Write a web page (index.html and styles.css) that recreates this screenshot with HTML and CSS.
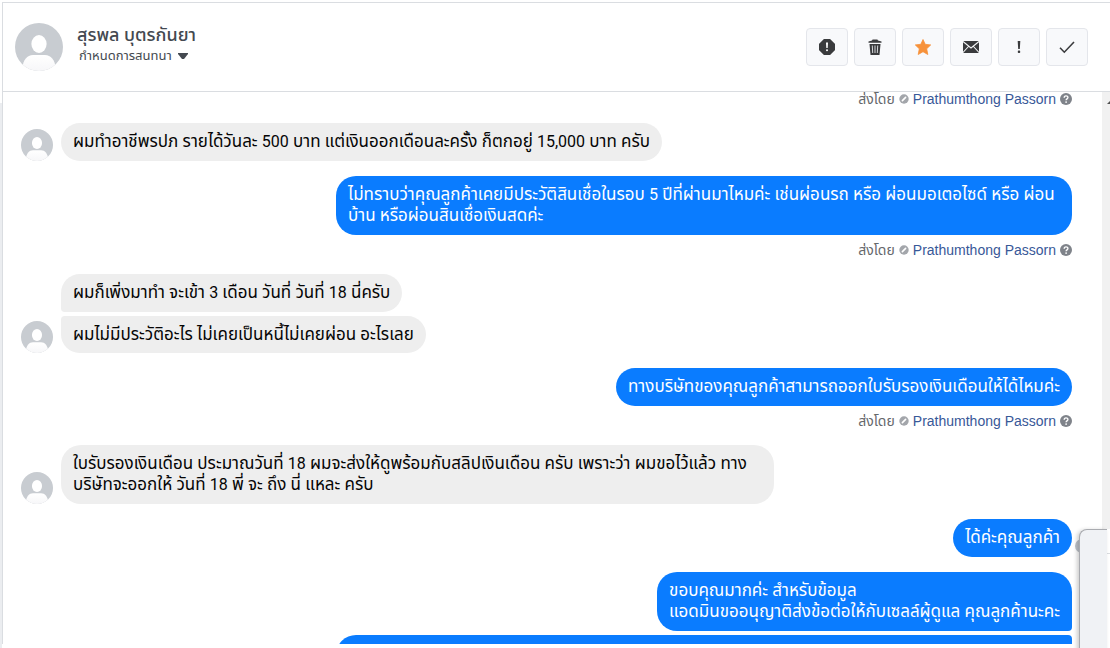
FILE: index.html
```html
<!doctype html>
<html lang="th">
<head>
<meta charset="utf-8">
<title>สุรพล บุตรกันยา</title>
<link rel="stylesheet" href="styles.css">
</head>

<body>
<!-- shared drawings -->
<svg class="defs" width="0" height="0">
	<defs>
		<linearGradient id="shade" x1="0" y1="0" x2="0" y2="1">
			<stop offset="0" stop-color="#fff"/>
			<stop offset="1" stop-color="#f6f6f8"/>
		</linearGradient>
		<clipPath id="round"><circle cx="24" cy="24" r="24"/></clipPath>
	</defs>
	<symbol id="person" viewBox="0 0 48 48">
		<g clip-path="url(#round)">
			<rect width="48" height="48" fill="#c8ccd1"/>
			<ellipse cx="24" cy="21" rx="7.6" ry="9" fill="#fff"/>
			<path d="M7 45c1.500-8 5-13 11-13h12c6 0 9.500 5 11 13v4H7z" fill="url(#shade)"/>
		</g>
	</symbol>
	<symbol id="badge" viewBox="0 0 10 10">
		<circle cx="5" cy="5" r="4.700" fill="#a3a6ab"/>
		<path d="M3.400 6.600l3.200-3.200" stroke="#fff" stroke-width="1.600" stroke-linecap="round"/>
	</symbol>
	<symbol id="help" viewBox="0 0 12 12">
		<circle cx="6" cy="6" r="6" fill="#7f838a"/>
		<path d="M4.200 4.700c0-2.500 3.700-2.400 3.700-.2 0 1.400-1.800 1.400-1.800 2.700" fill="none" stroke="#fff" stroke-width="1.400"/>
		<circle cx="6.100" cy="9.100" r=".9" fill="#fff"/>
	</symbol>
</svg>

<div class="window">
	<main class="chat">
		<header class="head">
			<svg class="avatar-big"><use href="#person"/></svg>
			<div class="who">
				<h1 class="name">สุรพล บุตรกันยา</h1>
				<button class="assign">กำหนดการสนทนา<svg class="caret" viewBox="0 0 10 6"><path d="M0 0h10v1L6 6H4L0 1z" fill="#444950"/></svg></button>
			</div>
			<div class="tools">
				<button class="tool" aria-label="สแปม"><svg class="icon" viewBox="0 0 16 16"><path d="M5 0h6l5 5v6l-5 5H5l-5-5V5z" fill="#3a3b3d" stroke="#3a3b3d" stroke-linejoin="round" stroke-width=".2"/><path d="M7 3.500h2L8.700 9H7.300z" fill="#fff"/><rect x="7" y="10.300" width="2" height="2" rx="1" fill="#fff"/></svg></button>
				<button class="tool" aria-label="ลบ"><svg class="icon" viewBox="0 0 16 16"><path d="M1.500 3.800V2.500L5 1.500 5.600.4h4.800l.6 1.100 3.500 1v1.300z" fill="#3a3b3d"/><path d="M2.500 5h11l-1 11h-9z" fill="#3a3b3d"/><path d="M5.300 6.500l.4 7.500M8 6.500V14M10.700 6.500l-.4 7.500" stroke="#d4d6d9" stroke-width="1"/></svg></button>
				<button class="tool" aria-label="ติดดาว"><svg class="icon" viewBox="0 0 16 16"><path d="M8 .5l2.200 4.800 5.500.6-4 3.900L12.800 15.500 8 12.700l-4.800 2.800 1.100-5.700-4-3.900 5.500-.6z" fill="#f7923b" stroke="#f7923b" stroke-linejoin="round" stroke-width=".8"/></svg></button>
				<button class="tool" aria-label="ยังไม่ได้อ่าน"><svg class="icon" viewBox="0 0 16 16"><rect y="2" width="16" height="12" rx="1" fill="#3a3b3d"/><path d="M0 2.500l8 6.500 8-6.500M0 13.500l5.500-6M16 13.500l-5.500-6" fill="none" stroke="#f5f6f7" stroke-width="1.100"/></svg></button>
				<button class="tool" aria-label="ติดตาม"><svg class="icon" viewBox="0 0 16 16"><path d="M6.700 2h2.600l-.5 8H7.200z" fill="#3a3b3d"/><rect x="6.800" y="11.600" width="2.400" height="2.400" rx=".8" fill="#3a3b3d"/></svg></button>
				<button class="tool" aria-label="เสร็จสิ้น"><svg class="icon" viewBox="0 0 16 16"><path d="M1 8.800l4.300 4.400L15 3" fill="none" stroke="#3a3b3d" stroke-width="1.600"/></svg></button>
			</div>
		</header>

		<div class="body">
			<div class="thread">
				<div class="sent">ส่งโดย <svg class="badge"><use href="#badge"/></svg> <a class="agent" href="#">Prathumthong Passorn</a> <svg class="help"><use href="#help"/></svg></div>

				<div class="group them">
					<svg class="avatar"><use href="#person"/></svg>
					<div class="stack">
						<p class="bubble">ผมทำอาชีพรปภ รายได้วันละ <span class="num">500</span> บาท แต่เงินออกเดือนละครั้ง ก็ตกอยู่ <span class="num">15,000</span> บาท ครับ</p>
					</div>
				</div>

				<div class="group us">
					<p class="bubble">ไม่ทราบว่าคุณลูกค้าเคยมีประวัติสินเชื่อในรอบ <span class="num">5</span> ปีที่ผ่านมาไหมค่ะ เช่นผ่อนรถ หรือ ผ่อนมอเตอไซด์ หรือ ผ่อน<wbr>บ้าน หรือผ่อนสินเชื่อเงินสดค่ะ</p>
				</div>
				<div class="sent">ส่งโดย <svg class="badge"><use href="#badge"/></svg> <a class="agent" href="#">Prathumthong Passorn</a> <svg class="help"><use href="#help"/></svg></div>

				<div class="group them">
					<svg class="avatar"><use href="#person"/></svg>
					<div class="stack">
						<p class="bubble first">ผมก็เพิ่งมาทำ จะเข้า <span class="num">3</span> เดือน วันที่ วันที่ <span class="num">18</span> นี่ครับ</p>
						<p class="bubble last">ผมไม่มีประวัติอะไร ไม่เคยเป็นหนี้ไม่เคยผ่อน อะไรเลย</p>
					</div>
				</div>

				<div class="group us">
					<p class="bubble">ทางบริษัทของคุณลูกค้าสามารถออกใบรับรองเงินเดือนให้ได้ไหมค่ะ</p>
				</div>
				<div class="sent">ส่งโดย <svg class="badge"><use href="#badge"/></svg> <a class="agent" href="#">Prathumthong Passorn</a> <svg class="help"><use href="#help"/></svg></div>

				<div class="group them">
					<svg class="avatar"><use href="#person"/></svg>
					<div class="stack">
						<p class="bubble">ใบรับรองเงินเดือน ประมาณวันที่ <span class="num">18</span> ผมจะส่งให้ดูพร้อมกับสลิปเงินเดือน ครับ เพราะว่า ผมขอไว้แล้ว ทาง<wbr>บริษัทจะออกให้ วันที่ <span class="num">18</span> พี่ จะ ถึง นี่ แหละ ครับ</p>
					</div>
				</div>

				<div class="group us">
					<p class="bubble">ได้ค่ะคุณลูกค้า</p>
				</div>

				<div class="group us">
					<p class="bubble first">ขอบคุณมากค่ะ สำหรับข้อมูล<br>แอดมินขออนุญาติส่งข้อต่อให้กับเซลล์ผู้ดูแล คุณลูกค้านะคะ</p>
					<p class="bubble last wide"></p>
				</div>
			</div>
			<div class="scroll"><svg class="up" viewBox="0 0 8 4"><path d="M0 4l4-4 4 4z" fill="#505050"/></svg></div>
		</div>
	</main>
	<div class="edge"></div>
	<div class="seen"></div>
	<div class="corner"></div>
	<div class="panel"></div>
</div>
</body>
</html>
```
FILE: styles.css
```css
body{
	margin: 0;
	background-color: #fff;
	font-family: Roboto, "Noto Sans Thai", "Noto Sans", sans-serif;
	color: #050505;
}
button{
	font-family: inherit;
	cursor: pointer;
}
.defs{
	position: absolute;
}
.window{
	position: relative;
	box-sizing: border-box;
	height: 100vh;
	padding: 2px 0 4px 2px;
	overflow: hidden;
}
.chat{
	display: flex;
	flex-direction: column;
	height: 100%;
	box-sizing: border-box;
	border-top: 1px solid #dadde1;
	border-left: 1px solid #dadde1;
}

/* header */
.head{
	display: flex;
	align-items: center;
	flex: none;
	height: 88px;
	padding: 0 22px 0 12px;
	border-bottom: 1px solid #dadde1;
}
.avatar-big{
	width: 48px;
	height: 48px;
}
.who{
	flex: 1;
	margin-left: 14px;
	padding-bottom: 6px;
}
.name{
	margin: 0;
	font-size: 18px;
	line-height: 24px;
	font-weight: 500;
	color: #444950;
}
.assign{
	display: flex;
	align-items: center;
	gap: 6px;
	padding: 0 2px;
	border: none;
	background: none;
	font-size: 13px;
	line-height: 18px;
	color: #444950;
}
.caret{
	width: 10px;
	height: 6px;
}
.tools{
	display: flex;
	gap: 6px;
}
.tool{
	display: flex;
	align-items: center;
	justify-content: center;
	width: 42px;
	height: 38px;
	padding: 0;
	border: 1px solid #e4e6eb;
	border-radius: 4px;
	background-color: #f8f9fb;
}
.icon{
	width: 16px;
	height: 16px;
}

/* messages */
.body{
	display: flex;
	flex: 1;
	min-height: 0;
	overflow: hidden;
}
.thread{
	flex: 1;
	margin-top: -8px;
	padding: 0 30px 0 18px;
}
.group{
	display: flex;
	margin-top: 15px;
}
.them{
	align-items: flex-end;
	gap: 8px;
}
.us{
	flex-direction: column;
	align-items: flex-end;
	gap: 4px;
}
.stack{
	display: flex;
	flex-direction: column;
	align-items: flex-start;
	gap: 4px;
	max-width: 713px;
}
.avatar{
	flex: none;
	width: 32px;
	height: 32px;
}
.bubble{
	margin: 0;
	padding: 8px 12px 9px;
	border-radius: 20px;
	background-color: #eee;
	font-size: 17px;
	line-height: 21px;
}
.num{
	font-size: 16px;
	line-height: 16px;
}
.them .first{
	border-bottom-left-radius: 4px;
}
.them .last{
	padding-bottom: 8px;
	border-top-left-radius: 4px;
}
.us .bubble{
	max-width: 712px;
	background-color: #0a7cff;
	color: #fff;
}
.us .first{
	border-bottom-right-radius: 4px;
}
.us .last{
	border-top-right-radius: 4px;
}
.us .wide{
	width: 712px;
	height: 42px;
}
.sent{
	display: flex;
	align-items: center;
	justify-content: flex-end;
	gap: 4px;
	padding-top: 6px;
	font-family: "Liberation Sans", "Noto Sans Thai", sans-serif;
	font-size: 14px;
	line-height: 18px;
	color: #65676b;
}
.agent{
	color: #385898;
	text-decoration: none;
}
.badge{
	width: 10px;
	height: 10px;
}
.help{
	width: 12px;
	height: 12px;
}

/* window edges */
.scroll{
	width: 8px;
	overflow: hidden;
	background-color: #f1f1f1;
}
.up{
	display: block;
	width: 8px;
	height: 4px;
	margin: 8px 0 0 5px;
}
.edge{
	position: absolute;
	left: 0;
	top: 103px;
	bottom: 0;
	width: 2px;
	background-color: #ebedf0;
}
.seen{
	position: absolute;
	right: 21px;
	bottom: 95px;
	width: 14px;
	height: 14px;
	border-radius: 7px;
	background-color: #bec2c9;
}
.corner{
	position: absolute;
	box-sizing: border-box;
	right: 0;
	bottom: 0;
	width: 8px;
	height: 119px;
	background: linear-gradient(#fff 24px, #dadde1 24px, #dadde1 25px, #fff 25px);
}
.panel{
	position: absolute;
	box-sizing: border-box;
	right: 3px;
	bottom: -8px;
	width: 28px;
	height: 127px;
	border: 1px solid #a9abb0;
	border-right: none;
	border-radius: 8px 0 0 0;
	background-color: #f0f2f5;
	box-shadow: -2px 1px 4px rgba(0, 0, 0, .2);
}
```
